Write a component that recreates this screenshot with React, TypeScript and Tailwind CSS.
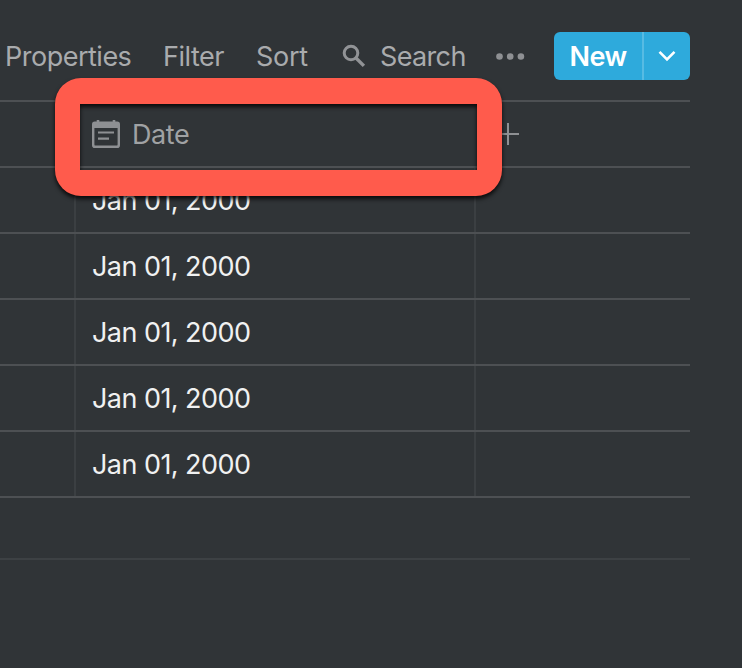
import React from "react";

const rows = [
  "Jan 01, 2000",
  "Jan 01, 2000",
  "Jan 01, 2000",
  "Jan 01, 2000",
  "Jan 01, 2000",
];

const SearchIcon: React.FC = () => (
  <svg width="24" height="24" viewBox="0 0 24 24" fill="none" stroke="#919396">
    <circle cx="9" cy="9" r="6.8" strokeWidth="3" />
    <path d="M14 14L21.9 21.9" strokeWidth="3.4" />
  </svg>
);

const CalendarIcon: React.FC = () => (
  <svg width="28" height="28" viewBox="0 0 28 28" fill="#8e9093">
    <path
      fillRule="evenodd"
      d="M4.7 0h2.6v1.6h13.4V0h2.6v1.6h1.9A2.8 2.8 0 0 1 28 4.4v20.8a2.8 2.8 0 0 1-2.8 2.8H2.8A2.8 2.8 0 0 1 0 25.2V4.4a2.8 2.8 0 0 1 2.8-2.8h1.9zM2.4 8v16.4a1.2 1.2 0 0 0 1.2 1.2h20.8a1.2 1.2 0 0 0 1.2-1.2V8z"
    />
    <path d="M6 11.4h16v2.2H6zM6 17.5h11v2.2H6z" />
  </svg>
);

const Toolbar: React.FC = () => (
  <div className="flex h-[100px] w-[690px] items-start pt-8">
    <div className="flex h-12 items-center text-[27px] text-[#a9abad]">
      <span className="ml-[5px] w-[158px] pt-0.5 tracking-[-0.5px]">Properties</span>
      <span className="w-[93px] pt-0.5 tracking-[-0.5px]">Filter</span>
      <span className="w-[86px] pt-0.5 tracking-[-0.3px]">Sort</span>
      <SearchIcon />
      <span className="ml-[14px] w-[116px] pt-0.5 tracking-[-0.65px]">Search</span>
      <svg width="29" height="7" viewBox="0 0 29 7" fill="#8e9093">
        <circle cx="3.5" cy="3.5" r="3.3" />
        <circle cx="14.2" cy="3.5" r="3.3" />
        <circle cx="24.9" cy="3.5" r="3.3" />
      </svg>
    </div>
    <div className="ml-auto flex h-12 w-[136px] overflow-hidden rounded-md bg-[#2eaadc] text-white">
      <button className="w-[90px] border-r-2 border-[#57bbe3] pt-0.5 text-[27px] font-semibold tracking-[-0.5px]">
        New
      </button>
      <button className="flex flex-1 items-center justify-center">
        <svg width="18" height="12" viewBox="0 0 18 12" fill="none">
          <path d="M1.5 1.8L9 9.3L16.5 1.8" stroke="white" strokeWidth="2.6" />
        </svg>
      </button>
    </div>
  </div>
);

const App: React.FC = () => {
  return (
    <div
      className="h-[668px] w-[742px] overflow-hidden bg-[#303437]"
      style={{ fontFamily: 'Inter, "Liberation Sans", sans-serif' }}
    >
      <Toolbar />

      <div className="relative w-[690px]">
        <div className="flex h-[66px] items-center border-t-2 border-[#4d5053] pl-[92px]">
          <CalendarIcon />
          <span className="ml-3 w-[369px] pt-0.5 text-[27px] tracking-[-0.4px] text-[#a0a2a4]">
            Date
          </span>
          <svg width="22" height="22" viewBox="0 0 22 22" stroke="#8e9093" strokeWidth="2">
            <path d="M0 11H18M7 0V22" />
          </svg>
        </div>

        {rows.map((date, i) => (
          <div key={i} className="flex h-[66px] border-t-2 border-[#4d5053]">
            <div className="w-[76px] border-r-2 border-[#3b3f42]" />
            <div className="flex w-[400px] items-center border-r-2 border-[#3b3f42] pt-0.5 pl-4 text-[27px] tracking-[-0.55px] text-[#f0f1f1]">
              {date}
            </div>
          </div>
        ))}

        <div className="h-[62px] border-t-2 border-[#4d5053]" />
        <div className="h-[2px] bg-[#3d4144]" />

        {/* highlight around the Date header */}
        <div className="absolute left-[55px] top-[-22px] h-[118px] w-[447px] rounded-[26px] border-x-[25px] border-y-[26px] border-[#ff5b4c] drop-shadow-[0_3px_2px_rgba(0,0,0,0.8)]" />
      </div>
    </div>
  );
};

export default App;
